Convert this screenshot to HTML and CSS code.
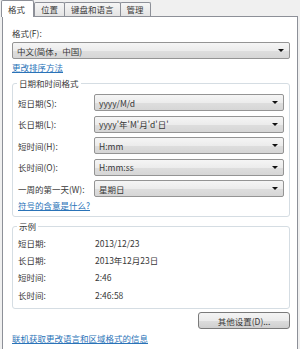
FILE: index.html
```html
<!doctype html>
<html lang="zh-CN">

<head>
  <meta charset="UTF-8" />
  <title>区域和语言</title>
  <link rel="stylesheet" href="styles.css">
</head>

<body>
  <div class="tabs">
    <div class="tab active">格式</div>
    <div class="tab">位置</div>
    <div class="tab">键盘和语言</div>
    <div class="tab">管理</div>
  </div>

  <div class="panel">
    <div class="label">格式(F):</div>
    <div class="combo combo-wide"><span>中文(简体，中国)</span></div>
    <a class="link link-sort" href="#">更改排序方法</a>

    <fieldset class="group">
      <legend>日期和时间格式</legend>
      <div class="format-grid">
        <span>短日期(S):</span>
        <div class="combo"><span>yyyy/M/d</span></div>
        <span>长日期(L):</span>
        <div class="combo"><span>yyyy'年'M'月'd'日'</span></div>
        <span>短时间(H):</span>
        <div class="combo"><span>H:mm</span></div>
        <span>长时间(O):</span>
        <div class="combo"><span>H:mm:ss</span></div>
        <span>一周的第一天(W):</span>
        <div class="combo"><span>星期日</span></div>
      </div>
      <a class="link link-symbols" href="#">符号的含意是什么?</a>
    </fieldset>

    <fieldset class="group group-sample">
      <legend>示例</legend>
      <div class="sample-grid">
        <span>短日期:</span>
        <span>2013/12/23</span>
        <span>长日期:</span>
        <span>2013年12月23日</span>
        <span>短时间:</span>
        <span>2:46</span>
        <span>长时间:</span>
        <span>2:46:58</span>
      </div>
    </fieldset>

    <div class="actions">
      <button class="btn">其他设置(D)...</button>
    </div>

    <a class="link link-online" href="#">联机获取更改语言和区域格式的信息</a>
  </div>
</body>

</html>
```

FILE: styles.css
```css
body {
  margin: 0;
  background-color: #f0f0f0;
  font-family: "Noto Sans CJK SC", "Noto Sans", sans-serif;
  font-size: 8.5px;
  line-height: 12px;
  color: #383838;
  height: 349px;
  overflow: hidden;
}

/* tab strip */
.tabs {
  display: flex;
  align-items: flex-start;
  height: 16px;
  padding-left: 1px;
  position: relative;
  z-index: 1;
}

.tab {
  height: 13px;
  margin-top: 2px;
  margin-left: -1px;
  padding: 0 6px;
  border: 1px solid #8d9098;
  border-bottom: none;
  border-radius: 2px 2px 0 0;
  background: linear-gradient(#f6f6f6, #e4e4e4);
  line-height: 13px;
  white-space: nowrap;
}

.tab.active {
  height: 16px;
  margin-top: 0;
  margin-left: 0;
  margin-right: 1px;
  padding: 0 8px 0 6px;
  background: #ffffff;
  line-height: 16px;
  z-index: 2;
}

/* main page */
.panel {
  margin-left: 2px;
  width: 296px;
  height: 340px;
  box-sizing: border-box;
  border: 1px solid #8d9098;
  background-color: #ffffff;
  padding: 10px 7px 0 9px;
}

.label {
  height: 12px;
}

.combo {
  display: flex;
  align-items: center;
  justify-content: space-between;
  height: 17px;
  box-sizing: border-box;
  padding: 0 4px 0 4px;
  border: 1px solid #949494;
  border-radius: 2px;
  background: linear-gradient(#f5f5f5, #ececec 50%, #dedede 51%, #d6d6d6);
  white-space: nowrap;
}

.combo::after {
  content: "";
  border-left: 3px solid transparent;
  border-right: 3px solid transparent;
  border-top: 3px solid #111111;
  margin-right: 1px;
}

.combo-wide {
  margin-top: 3px;
}

.link {
  display: inline-block;
  color: #2a73b8;
  text-decoration: underline;
  height: 12px;
}

.link-sort {
  margin-top: 2px;
}

/* group boxes */
.group {
  margin: 4px 0 0 0;
  padding: 5px 5px 5px 5px;
  border: 1px solid #d5dde3;
  border-radius: 3px;
}

.group legend {
  padding: 0 2px;
  margin-left: -1px;
  line-height: 12px;
}

.format-grid {
  display: grid;
  grid-template-columns: 76px 1fr;
  grid-auto-rows: 17px;
  row-gap: 4.5px;
  align-items: center;
}

.link-symbols {
  margin-top: 2px;
}

.group-sample {
  margin-top: 3px;
  padding-top: 2px;
}

.sample-grid {
  display: grid;
  grid-template-columns: 77px 1fr;
  grid-auto-rows: 17.3px;
  align-items: center;
}

/* bottom */
.actions {
  display: flex;
  justify-content: flex-end;
  margin-top: 3px;
}

.btn {
  width: 92px;
  height: 17px;
  padding: 0;
  border: 1px solid #7a7a7a;
  border-radius: 3px;
  background: linear-gradient(#f4f4f4, #ebebeb 50%, #dddddd 51%, #cfcfcf);
  font-family: inherit;
  font-size: 8.5px;
  color: #383838;
}

.link-online {
  margin-top: 3px;
}
```
